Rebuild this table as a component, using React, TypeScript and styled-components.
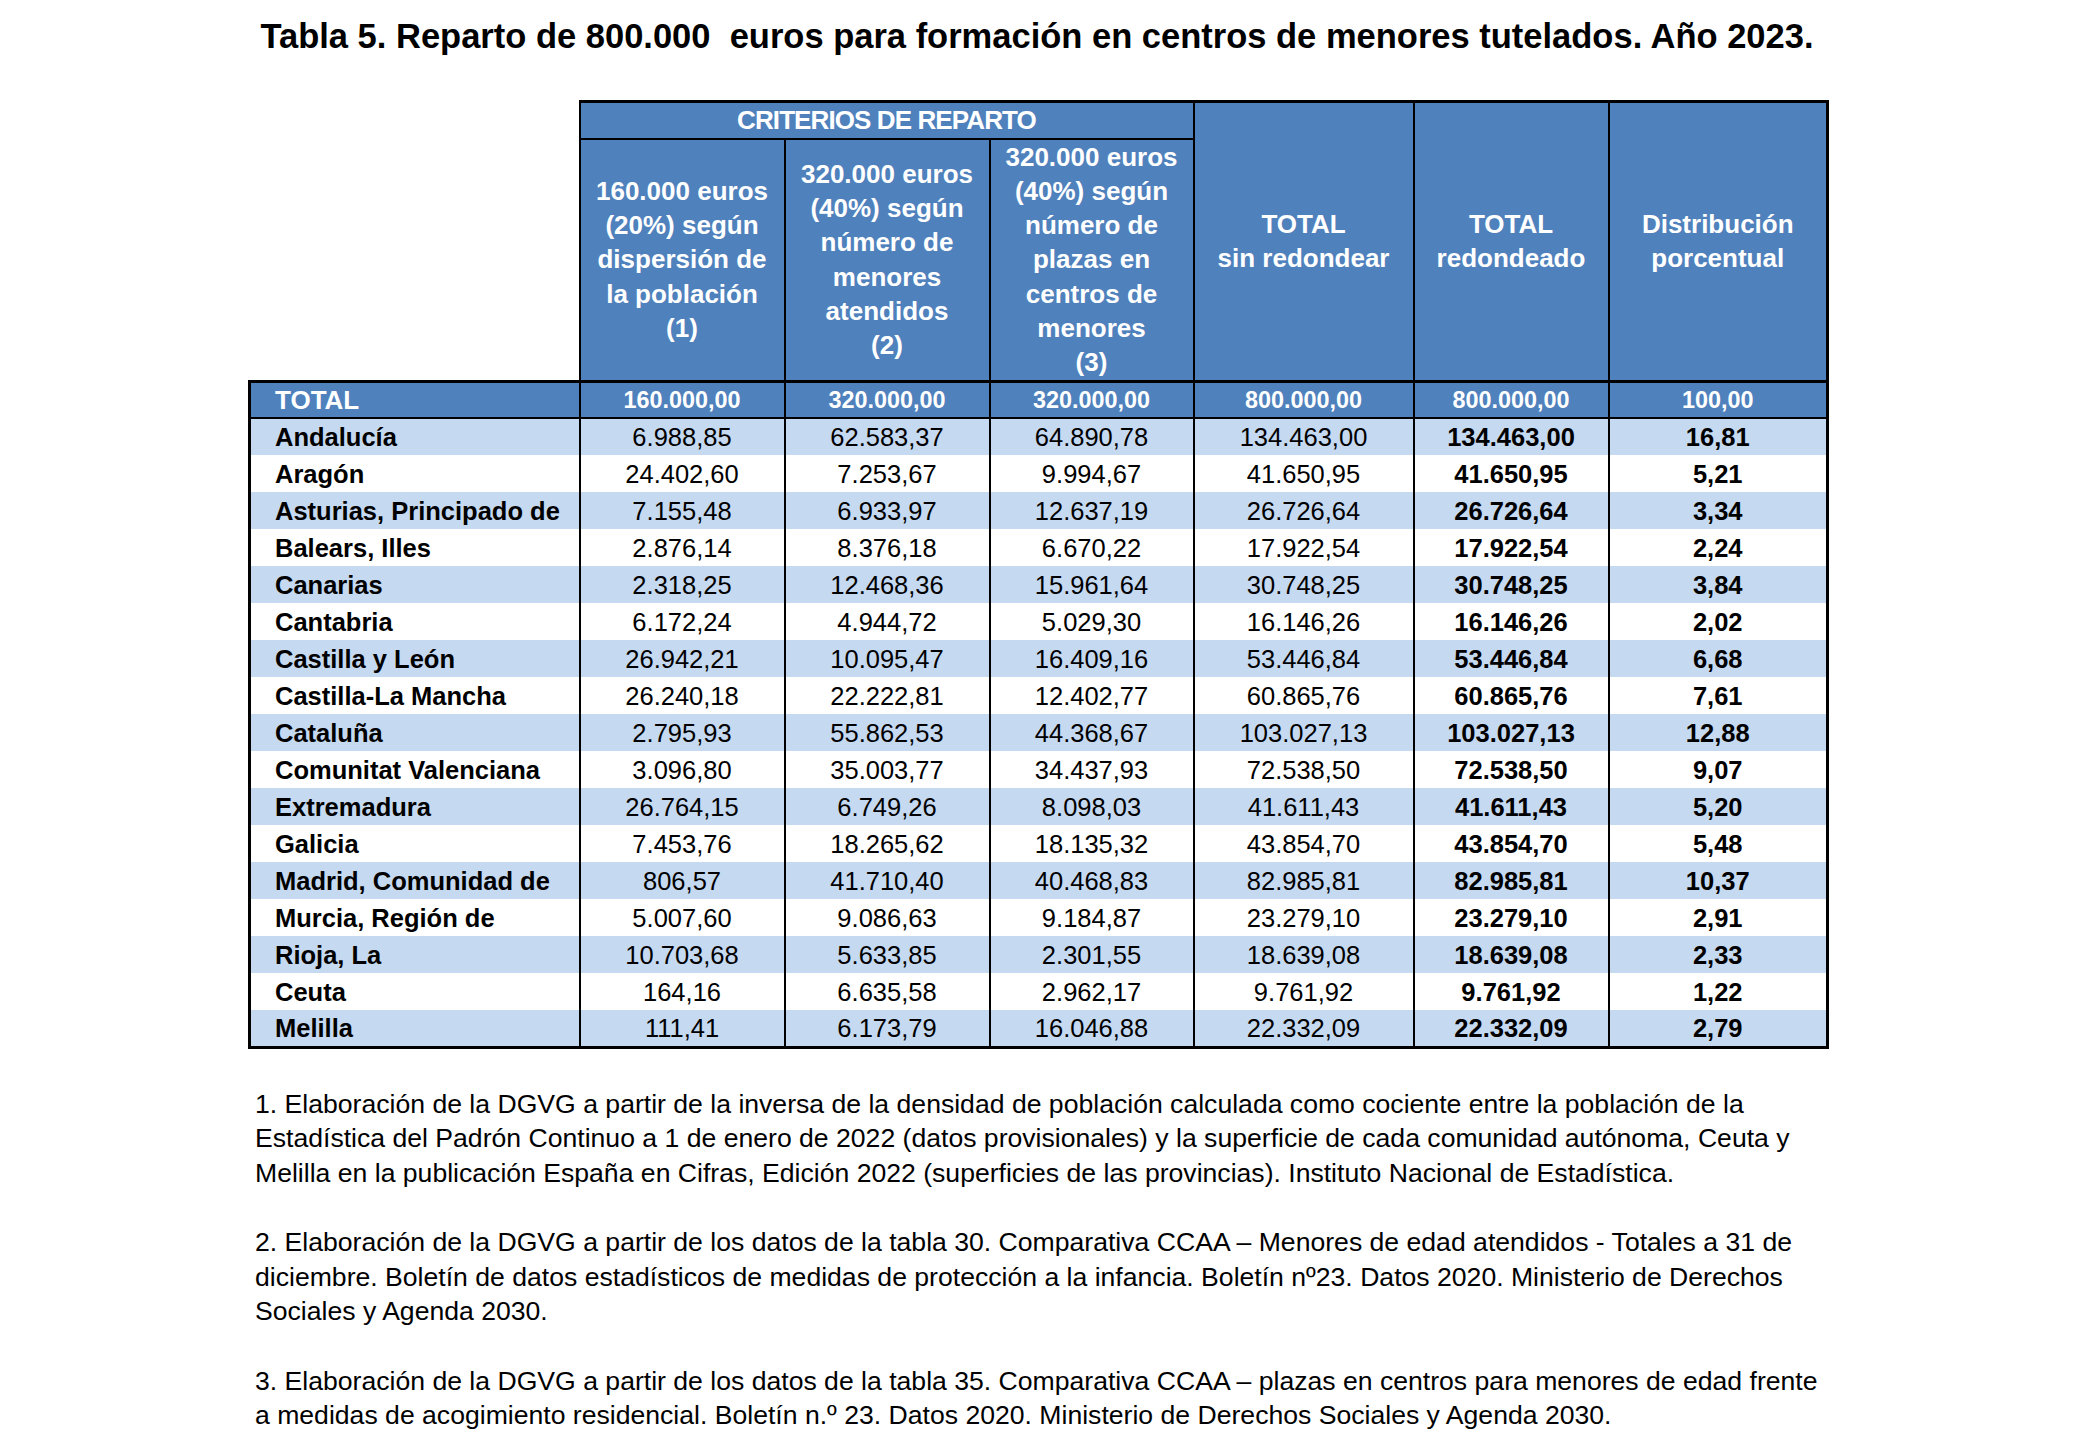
import React from "react";
import styled, { createGlobalStyle } from "styled-components";

const GlobalStyle = createGlobalStyle`
  html, body { margin: 0; padding: 0; background: #ffffff; }
  body { font-family: "Liberation Sans", Arial, sans-serif; color: #000000; }
`;

const BLUE = "#4f81bd";
const BAND = "#c5d9f1";

const Page = styled.main`
  display: flex;
  flex-direction: column;
  align-items: center;
  padding: 16px 5px 0 0;
  width: 2074px;
`;

const Title = styled.h1`
  margin: 0 0 44px;
  font-size: 34.5px;
  line-height: 40px;
  font-weight: 700;
  text-align: center;
  white-space: pre;
`;

const Column = styled.div`
  width: 1578px;
  display: flex;
  flex-direction: column;
`;

const Table = styled.table`
  width: 1578px;
  border-collapse: collapse;
  table-layout: fixed;
  font-size: 25.5px;
`;

const HeadRow = styled.tr<{ $h: number }>`
  height: ${(p) => p.$h}px;
`;

const Corner = styled.th`
  border: none;
  background: transparent;
  padding: 0;
`;

const HeadCell = styled.th<{ $last?: boolean; $tight?: boolean }>`
  background: ${BLUE};
  color: #ffffff;
  font-size: 26px;
  font-weight: 700;
  line-height: 34.3px;
  letter-spacing: ${(p) => (p.$tight ? "-0.9px" : "0")};
  text-align: center;
  vertical-align: middle;
  padding: 0 4px;
  border: 2px solid #000;
  border-top-width: 3px;
  border-right-width: ${(p) => (p.$last ? 3 : 2)}px;
  white-space: nowrap;
`;

const SubHeadCell = styled(HeadCell)`
  border-top-width: 2px;
`;

const BodyRow = styled.tr<{ $bg: string }>`
  height: 37px;
  background: ${(p) => p.$bg};
`;

const NameCell = styled.td<{ $light?: boolean; $bottom?: boolean }>`
  text-align: left;
  padding: 0 0 0 24px;
  font-size: ${(p) => (p.$light ? 26 : 25.5)}px;
  font-weight: 700;
  color: ${(p) => (p.$light ? "#ffffff" : "#000000")};
  border: 3px solid #000;
  border-top: none;
  border-right-width: 2px;
  border-bottom: ${(p) => (p.$bottom ? "3px solid #000" : "none")};
  white-space: nowrap;
  line-height: 30px;
`;

const NumCell = styled.td<{ $bold?: boolean; $light?: boolean; $last?: boolean; $bottom?: boolean }>`
  text-align: center;
  padding: 0;
  font-size: ${(p) => (p.$light ? 23.4 : 25.5)}px;
  font-weight: ${(p) => (p.$bold ? 700 : 400)};
  color: ${(p) => (p.$light ? "#ffffff" : "#000000")};
  border-left: 2px solid #000;
  border-right: ${(p) => (p.$last ? 3 : 2)}px solid #000;
  border-bottom: ${(p) => (p.$bottom ? "3px solid #000" : "none")};
  white-space: nowrap;
  line-height: 30px;
`;

const TotalRow = styled.tr`
  height: 37px;
  background: ${BLUE};
  & > td {
    border-top: 3px solid #000;
    border-bottom: 2px solid #000;
  }
`;

const Notes = styled.div`
  margin-top: 38px;
  padding-left: 7px;
  font-size: 26.6px;
  line-height: 34.5px;
  display: flex;
  flex-direction: column;
  gap: 35px;
`;

const Note = styled.p`
  margin: 0;
`;

const NoteLine = styled.span`
  display: block;
  white-space: nowrap;
`;

type Row = [string, string, string, string, string, string, string];

const rows: Row[] = [
  ["Andalucía", "6.988,85", "62.583,37", "64.890,78", "134.463,00", "134.463,00", "16,81"],
  ["Aragón", "24.402,60", "7.253,67", "9.994,67", "41.650,95", "41.650,95", "5,21"],
  ["Asturias, Principado de", "7.155,48", "6.933,97", "12.637,19", "26.726,64", "26.726,64", "3,34"],
  ["Balears, Illes", "2.876,14", "8.376,18", "6.670,22", "17.922,54", "17.922,54", "2,24"],
  ["Canarias", "2.318,25", "12.468,36", "15.961,64", "30.748,25", "30.748,25", "3,84"],
  ["Cantabria", "6.172,24", "4.944,72", "5.029,30", "16.146,26", "16.146,26", "2,02"],
  ["Castilla y León", "26.942,21", "10.095,47", "16.409,16", "53.446,84", "53.446,84", "6,68"],
  ["Castilla-La Mancha", "26.240,18", "22.222,81", "12.402,77", "60.865,76", "60.865,76", "7,61"],
  ["Cataluña", "2.795,93", "55.862,53", "44.368,67", "103.027,13", "103.027,13", "12,88"],
  ["Comunitat Valenciana", "3.096,80", "35.003,77", "34.437,93", "72.538,50", "72.538,50", "9,07"],
  ["Extremadura", "26.764,15", "6.749,26", "8.098,03", "41.611,43", "41.611,43", "5,20"],
  ["Galicia", "7.453,76", "18.265,62", "18.135,32", "43.854,70", "43.854,70", "5,48"],
  ["Madrid, Comunidad de", "806,57", "41.710,40", "40.468,83", "82.985,81", "82.985,81", "10,37"],
  ["Murcia, Región de", "5.007,60", "9.086,63", "9.184,87", "23.279,10", "23.279,10", "2,91"],
  ["Rioja, La", "10.703,68", "5.633,85", "2.301,55", "18.639,08", "18.639,08", "2,33"],
  ["Ceuta", "164,16", "6.635,58", "2.962,17", "9.761,92", "9.761,92", "1,22"],
  ["Melilla", "111,41", "6.173,79", "16.046,88", "22.332,09", "22.332,09", "2,79"],
];

const totals = ["160.000,00", "320.000,00", "320.000,00", "800.000,00", "800.000,00", "100,00"];

const colWidths = [330, 205, 205, 204, 220, 195, 219];

const criteria = [
  ["160.000 euros", "(20%) según", "dispersión de", "la población", "(1)"],
  ["320.000 euros", "(40%) según", "número de", "menores", "atendidos", "(2)"],
  ["320.000 euros", "(40%) según", "número de", "plazas en", "centros de", "menores", "(3)"],
];

const totalsHead = [
  ["TOTAL", "sin redondear"],
  ["TOTAL", "redondeado"],
  ["Distribución", "porcentual"],
];

const notes = [
  [
    "1. Elaboración de la DGVG a partir de la inversa de la densidad de población calculada como cociente entre la población de la",
    "Estadística del Padrón Continuo a 1 de enero de 2022 (datos provisionales) y la superficie de cada comunidad autónoma, Ceuta y",
    "Melilla en la publicación España en Cifras, Edición 2022 (superficies de las provincias). Instituto Nacional de Estadística.",
  ],
  [
    "2. Elaboración de la DGVG a partir de los datos de la tabla 30. Comparativa CCAA – Menores de edad atendidos - Totales a 31 de",
    "diciembre. Boletín de datos estadísticos de medidas de protección a la infancia. Boletín nº23. Datos 2020. Ministerio de Derechos",
    "Sociales y Agenda 2030.",
  ],
  [
    "3. Elaboración de la DGVG a partir de los datos de la tabla 35. Comparativa CCAA – plazas en centros para menores de edad frente",
    "a medidas de acogimiento residencial. Boletín n.º 23. Datos 2020. Ministerio de Derechos Sociales y Agenda 2030.",
  ],
];

const Lines: React.FC<{ lines: string[] }> = ({ lines }) => (
  <>
    {lines.map((l, i) => (
      <React.Fragment key={i}>
        {i > 0 && <br />}
        {l}
      </React.Fragment>
    ))}
  </>
);

export default function App() {
  return (
    <>
      <GlobalStyle />
      <Page>
        <Title>{"Tabla 5. Reparto de 800.000  euros para formación en centros de menores tutelados. Año 2023."}</Title>
        <Column>
          <Table>
            <colgroup>
              {colWidths.map((w, i) => (
                <col key={i} style={{ width: w }} />
              ))}
            </colgroup>
            <thead>
              <HeadRow $h={37}>
                <Corner rowSpan={2} />
                <HeadCell colSpan={3} $tight>
                  CRITERIOS DE REPARTO
                </HeadCell>
                {totalsHead.map((h, i) => (
                  <HeadCell key={i} rowSpan={2} $last={i === 2}>
                    <Lines lines={h} />
                  </HeadCell>
                ))}
              </HeadRow>
              <HeadRow $h={240}>
                {criteria.map((c, i) => (
                  <SubHeadCell key={i}>
                    <Lines lines={c} />
                  </SubHeadCell>
                ))}
              </HeadRow>
            </thead>
            <tbody>
              <TotalRow>
                <NameCell $light>TOTAL</NameCell>
                {totals.map((t, i) => (
                  <NumCell key={i} $bold $light $last={i === 5}>
                    {t}
                  </NumCell>
                ))}
              </TotalRow>
              {rows.map((r, ri) => {
                const bottom = ri === rows.length - 1;
                return (
                  <BodyRow key={r[0]} $bg={ri % 2 === 0 ? BAND : "#ffffff"}>
                    <NameCell $bottom={bottom}>{r[0]}</NameCell>
                    {r.slice(1).map((v, i) => (
                      <NumCell key={i} $bold={i >= 4} $last={i === 5} $bottom={bottom}>
                        {v}
                      </NumCell>
                    ))}
                  </BodyRow>
                );
              })}
            </tbody>
          </Table>
          <Notes>
            {notes.map((n, i) => (
              <Note key={i}>
                {n.map((l, j) => (
                  <NoteLine key={j}>{l}</NoteLine>
                ))}
              </Note>
            ))}
          </Notes>
        </Column>
      </Page>
    </>
  );
}
